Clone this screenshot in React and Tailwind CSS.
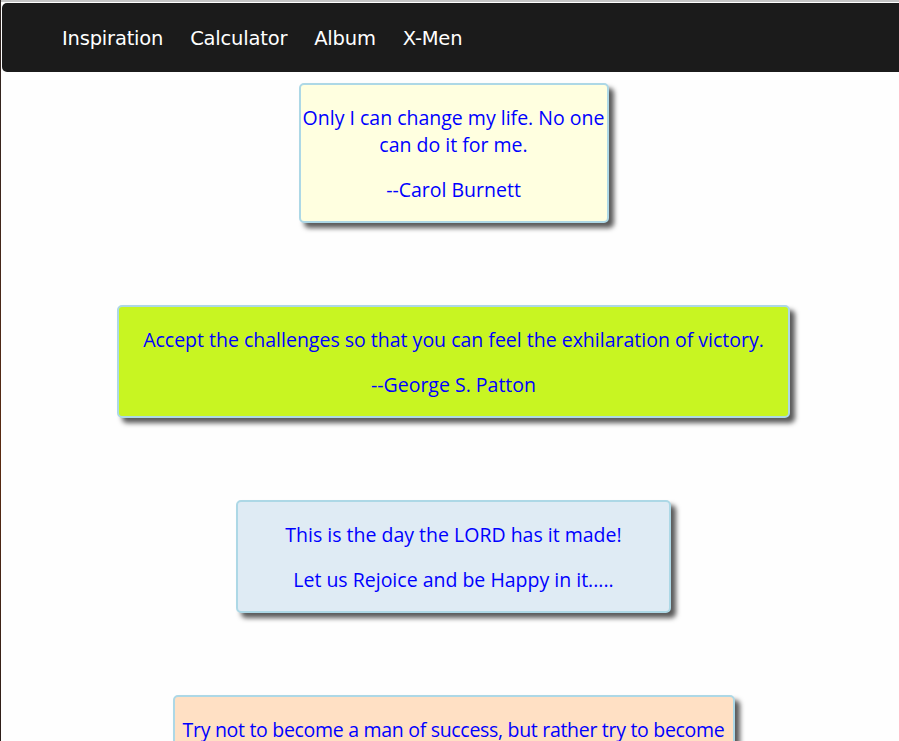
const quotes = [
  {
    lines: [["Only I can change my life. No one can do it for me."]],
    author: "--Carol Burnett",
    box: "w-[310px] bg-[#ffffe0]",
  },
  {
    lines: [["Accept the challenges so that you can feel the exhilaration of victory."]],
    author: "--George S. Patton",
    box: "w-[673px] bg-[#c8f522]",
  },
  {
    lines: [["This is the day the LORD has it made!"]],
    author: "Let us Rejoice and be Happy in it.....",
    box: "w-[435px] bg-[#dfebf4]",
  },
  {
    lines: [["Try not to become a man of success, but rather try to become", "a man of value."]],
    author: "--Albert Einstein",
    box: "w-[562px] bg-[#ffe0c4] tracking-[-0.3px]",
  },
];

function NavBar() {
  const links = ["Inspiration", "Calculator", "Album", "X-Men"];
  return (
    <nav className="ml-[1px] mt-[1px] h-[69px] rounded-l-[5px] bg-[#1b1b1b] flex items-center pl-[60px] gap-[27px]">
      {links.map((l) => (
        <a
          key={l}
          href="#"
          className="text-white text-[19.5px] font-['DejaVu_Sans',sans-serif] tracking-[-0.2px] pt-[3px]"
        >
          {l}
        </a>
      ))}
    </nav>
  );
}

function QuoteCard({ q }) {
  return (
    <div
      className={`${q.box} mx-auto border-2 border-[#add8e6] rounded-[5px] shadow-[5px_5px_5px_#5a5a5a] py-[0.5px] text-center text-[#0000ff] text-[19.5px] leading-[27px] font-['Open_Sans',sans-serif]`}
    >
      {q.lines.map((parts) => (
        <p key={parts[0]} className="my-[18px]">
          {parts.map((t, i) => (
            <span key={t} className={parts.length > 1 && i === 0 ? "whitespace-nowrap" : ""}>
              {i > 0 && <br />}
              {t}
            </span>
          ))}
        </p>
      ))}
      <p className="my-[18px]">{q.author}</p>
    </div>
  );
}

export default function App() {
  return (
    <div className="min-h-screen bg-[#fefefe] flex">
      <div className="w-[1px] shrink-0 bg-gradient-to-b from-[#2a2220] via-[#5a2a10] to-[#101418]" />
      <div className="flex-1 min-w-0">
        <div className="h-[2px] bg-[#c4c4c4]" />
        <NavBar />
        <main className="pl-[7px] pt-[11px] flex flex-col gap-[82px] pb-20">
          {quotes.map((q) => (
            <QuoteCard key={q.author} q={q} />
          ))}
        </main>
      </div>
    </div>
  );
}
